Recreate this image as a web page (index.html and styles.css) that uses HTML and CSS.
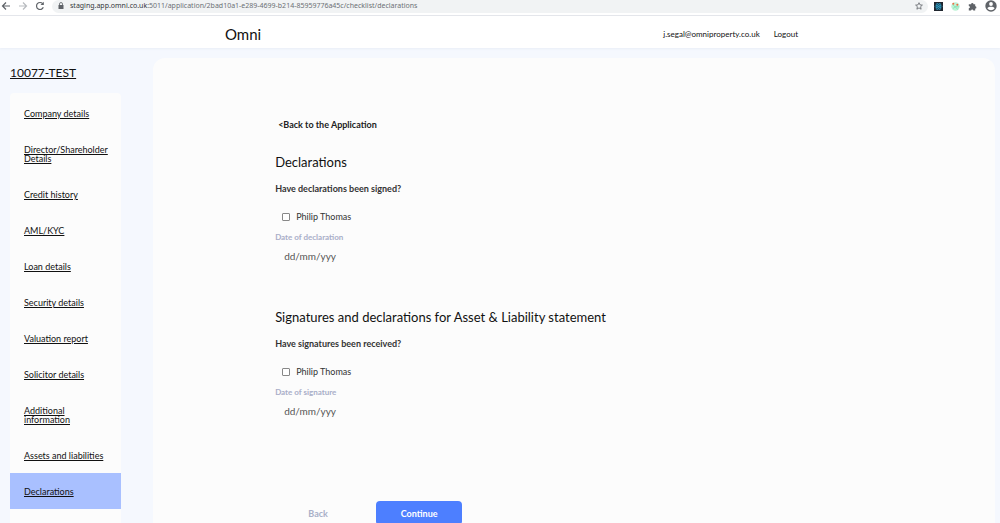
FILE: index.html
```html
<!DOCTYPE html>
<html lang="en">
<head>
<meta charset="utf-8">
<meta name="viewport" content="width=device-width, initial-scale=1">
<title>Declarations - Omni</title>
<link rel="stylesheet" href="styles.css">
</head>
<body>
<div class="browser">
  <button class="nav-button" aria-label="Back one page"><svg width="10" height="10" viewBox="0 0 10 10" fill="none" stroke="#5f6368" stroke-width="1.2"><path d="M9 5H1.5M5 1.5 1.5 5 5 8.500"/></svg></button>
  <button class="nav-button" aria-label="Forward one page"><svg width="10" height="10" viewBox="0 0 10 10" fill="none" stroke="#b8bbbf" stroke-width="1.2"><path d="M1 5h7.500M5 1.500 8.500 5 5 8.500"/></svg></button>
  <button class="nav-button" aria-label="Reload"><svg width="10" height="10" viewBox="0 0 10 10" fill="none" stroke="#5f6368" stroke-width="1.200"><path d="M8.300 6.300A3.500 3.500 0 1 1 7.700 2.700"/><path d="M8.800.8v3.300H5.500z" fill="#5f6368" stroke="none"/></svg></button>
  <div class="address">
    <svg width="6" height="8" viewBox="0 0 6 8"><path d="M.5 3h5v4h-5z" fill="#5f6368"/><path d="M1.500 3V2a1.500 1.500 0 0 1 3 0v1" fill="none" stroke="#5f6368" stroke-width=".8"/></svg>
    <span class="url"><span class="host">staging.app.omni.co.uk</span>:5011/application/2bad10a1-e289-4699-b214-85959776a45c/checklist/declarations</span>
    <svg width="8" height="8" viewBox="0 0 8 8" fill="none" stroke="#5f6368" stroke-width=".8"><path d="m4 .7 1 2.200 2.400.2-1.800 1.600.5 2.500L4 5.900 1.900 7.200l.5-2.500L.6 3.100 3 2.900z"/></svg>
  </div>
  <div class="extensions">
    <svg width="9" height="9" viewBox="0 0 9 9"><path d="M0 0h9v9H0z" fill="#20262f"/><g fill="none" stroke="#2b9cc4" stroke-width=".7"><ellipse cx="4.500" cy="4.500" rx="3.500" ry="1.400"/><ellipse cx="4.500" cy="4.500" rx="3.500" ry="1.400" transform="rotate(60 4.500 4.500)"/><ellipse cx="4.500" cy="4.500" rx="3.500" ry="1.400" transform="rotate(120 4.500 4.500)"/></g><circle cx="4.500" cy="4.500" r=".8" fill="#2b9cc4"/></svg>
    <svg width="9" height="9" viewBox="0 0 9 9"><circle cx="4.500" cy="4.500" r="4.200" fill="#bdf3d6"/><path d="m1.500 2.500 5.500 5M2 6.500l2.500-2L8 5" fill="none" stroke="#72d6a8" stroke-width=".6"/><circle cx="2.300" cy="1.700" r="1" fill="#f06a42"/><circle cx="6.300" cy="2.700" r="1" fill="#f06a42"/></svg>
    <svg width="9" height="9" viewBox="0 0 9 9"><path d="M.8 2.200h2.300a1.200 1.200 0 1 1 2.400 0h1.700v2a1.200 1.200 0 1 1 0 2.400v2H5.300a1.100 1.100 0 0 0-2.200 0H.8V6.300a1.100 1.100 0 0 0 0-2.200z" fill="#5f6368"/></svg>
    <svg width="12" height="12" viewBox="0 0 12 12"><circle cx="6" cy="6" r="5.700" fill="#5f6368"/><circle cx="6" cy="4" r="1.900" fill="#fff"/><path d="M2.300 8.300C3 7 4.700 6.700 6 6.700s3 .3 3.700 1.600A4.400 4.400 0 0 1 6 10.300a4.400 4.400 0 0 1-3.700-2z" fill="#fff"/></svg>
  </div>
</div>

<header class="header">
  <span class="brand">Omni</span>
  <nav class="account">
    <a href="#account">j.segal@omniproperty.co.uk</a>
    <a href="#logout">Logout</a>
  </nav>
</header>

<div class="layout">
  <aside class="sidebar">
    <a class="case-link" href="#case">10077-TEST</a>
    <ul class="steps">
      <li><a href="#company">Company details</a></li>
      <li><a href="#director">Director/Shareholder Details</a></li>
      <li><a href="#credit">Credit history</a></li>
      <li><a href="#aml">AML/KYC</a></li>
      <li><a href="#loan">Loan details</a></li>
      <li><a href="#security">Security details</a></li>
      <li><a href="#valuation">Valuation report</a></li>
      <li><a href="#solicitor">Solicitor details</a></li>
      <li><a href="#additional">Additional information</a></li>
      <li><a href="#assets">Assets and liabilities</a></li>
      <li class="current"><a href="#declarations" aria-current="page">Declarations</a></li>
    </ul>
  </aside>

  <main class="panel">
    <form class="form">
      <a class="back-link" href="#application">&lt;Back to the Application</a>
      <section class="group">
        <h2>Declarations</h2>
        <p class="question">Have declarations been signed?</p>
        <label class="check"><input type="checkbox"> Philip Thomas</label>
        <label class="date-label" for="declaration-date">Date of declaration</label>
        <input class="date" id="declaration-date" type="text" placeholder="dd/mm/yyy">
      </section>
      <section class="group">
        <h2>Signatures and declarations for Asset &amp; Liability statement</h2>
        <p class="question">Have signatures been received?</p>
        <label class="check"><input type="checkbox"> Philip Thomas</label>
        <label class="date-label" for="signature-date">Date of signature</label>
        <input class="date" id="signature-date" type="text" placeholder="dd/mm/yyy">
      </section>
      <div class="actions">
        <button class="back" type="button">Back</button>
        <button class="continue" type="submit">Continue</button>
      </div>
    </form>
  </main>
</div>
</body>
</html>
```

FILE: styles.css
```css
* {
  box-sizing: border-box;
}

body {
  margin: 0;
  height: 100vh;
  overflow: hidden;
  display: flex;
  flex-direction: column;
  background: #f5f8fe;
  color: #111;
  font-family: Lato, "Liberation Sans", sans-serif;
  font-size: 9px;
}

a {
  color: inherit;
}

button,
input {
  font: inherit;
}

button {
  border: 0;
  padding: 0;
  background: none;
}

svg {
  display: block;
  flex: none;
}

.browser {
  flex: none;
  display: flex;
  align-items: flex-start;
  height: 16px;
  padding-left: 1px;
  background: #fff;
  border-bottom: 1px solid #e4e6ea;
}

.nav-button {
  width: 17px;
  padding-top: 1px;
}

.address {
  flex: 1;
  display: flex;
  align-items: center;
  gap: 6px;
  height: 13px;
  padding: 0 5px 1px 6px;
  background: #f1f3f4;
  border-radius: 7px;
}

.url {
  flex: 1;
  color: #6c7075;
  font-family: "Noto Sans", sans-serif;
  font-size: 7px;
  line-height: 12px;
}

.host {
  color: #33363a;
}

.extensions {
  display: flex;
  align-items: center;
  gap: 8px;
  height: 12px;
  padding: 0 3px 0 6px;
}

.header {
  flex: none;
  display: flex;
  align-items: center;
  justify-content: space-between;
  height: 32px;
  padding: 3px 20.2% 0 22.5%;
  background: #fff;
  box-shadow: 0 1px 2px #e9eef6;
}

.brand {
  font-size: 15px;
  line-height: 20px;
}

.account {
  display: flex;
  gap: 14px;
  font-size: 8px;
}

.account a {
  text-decoration: none;
}

.layout {
  flex: 1;
  min-height: 0;
  display: flex;
  gap: 32px;
  padding: 10px 5px 0 10px;
}

.sidebar {
  flex: none;
  width: 111px;
}

.case-link {
  display: block;
  padding: 7px 0 12px;
  font-size: 12px;
  line-height: 16px;
}

.steps {
  margin: 0;
  padding: 2px 0 24px;
  list-style: none;
  background: #fcfcfc;
  border-radius: 4px;
}

.steps a {
  display: block;
  padding: 14px 12px 13px 14px;
  line-height: 9px;
}

.steps .current {
  background: #a9c0ff;
}

.panel {
  flex: 1;
  min-width: 0;
  padding: 60px 12.4% 0;
  background: #fcfcfc;
  border-radius: 12px 12px 0 0;
}

.back-link {
  display: inline-block;
  padding-left: 3px;
  color: #222;
  font-weight: 700;
  line-height: 14px;
  text-decoration: none;
}

.group {
  display: flex;
  flex-direction: column;
  align-items: flex-start;
  padding: 20px 0 19px;
}

.group h2 {
  margin: 0;
  font-size: 13px;
  font-weight: 400;
  line-height: 20px;
}

.question {
  margin: 10px 0 14px;
  color: #333;
  font-weight: 700;
  line-height: 14px;
}

.check {
  display: flex;
  align-items: center;
  gap: 6px;
  padding-left: 7px;
  color: #333;
  line-height: 14px;
}

.check input {
  appearance: none;
  width: 8px;
  height: 8px;
  margin: 0;
  background: #fff;
  border: 1px solid #888;
  border-radius: 1px;
}

.check input:checked {
  background: #4d7fff;
}

.date-label {
  margin-top: 6px;
  color: #a9aec8;
  font-size: 8px;
  font-weight: 700;
  line-height: 14px;
}

.date {
  width: 186px;
  height: 24px;
  padding: 0 9px;
  background: transparent;
  border: 0;
  color: #444;
  font-size: 10px;
}

.date::placeholder {
  color: #555;
  opacity: 1;
}

.actions {
  display: flex;
  gap: 15px;
  padding: 59px 0 30px;
}

.actions button {
  width: 86px;
  height: 24px;
  border-radius: 4px;
  font-weight: 700;
}

.actions .back {
  color: #a9b0c8;
}

.actions .continue {
  background: #4d7fff;
  color: #fff;
}
```
